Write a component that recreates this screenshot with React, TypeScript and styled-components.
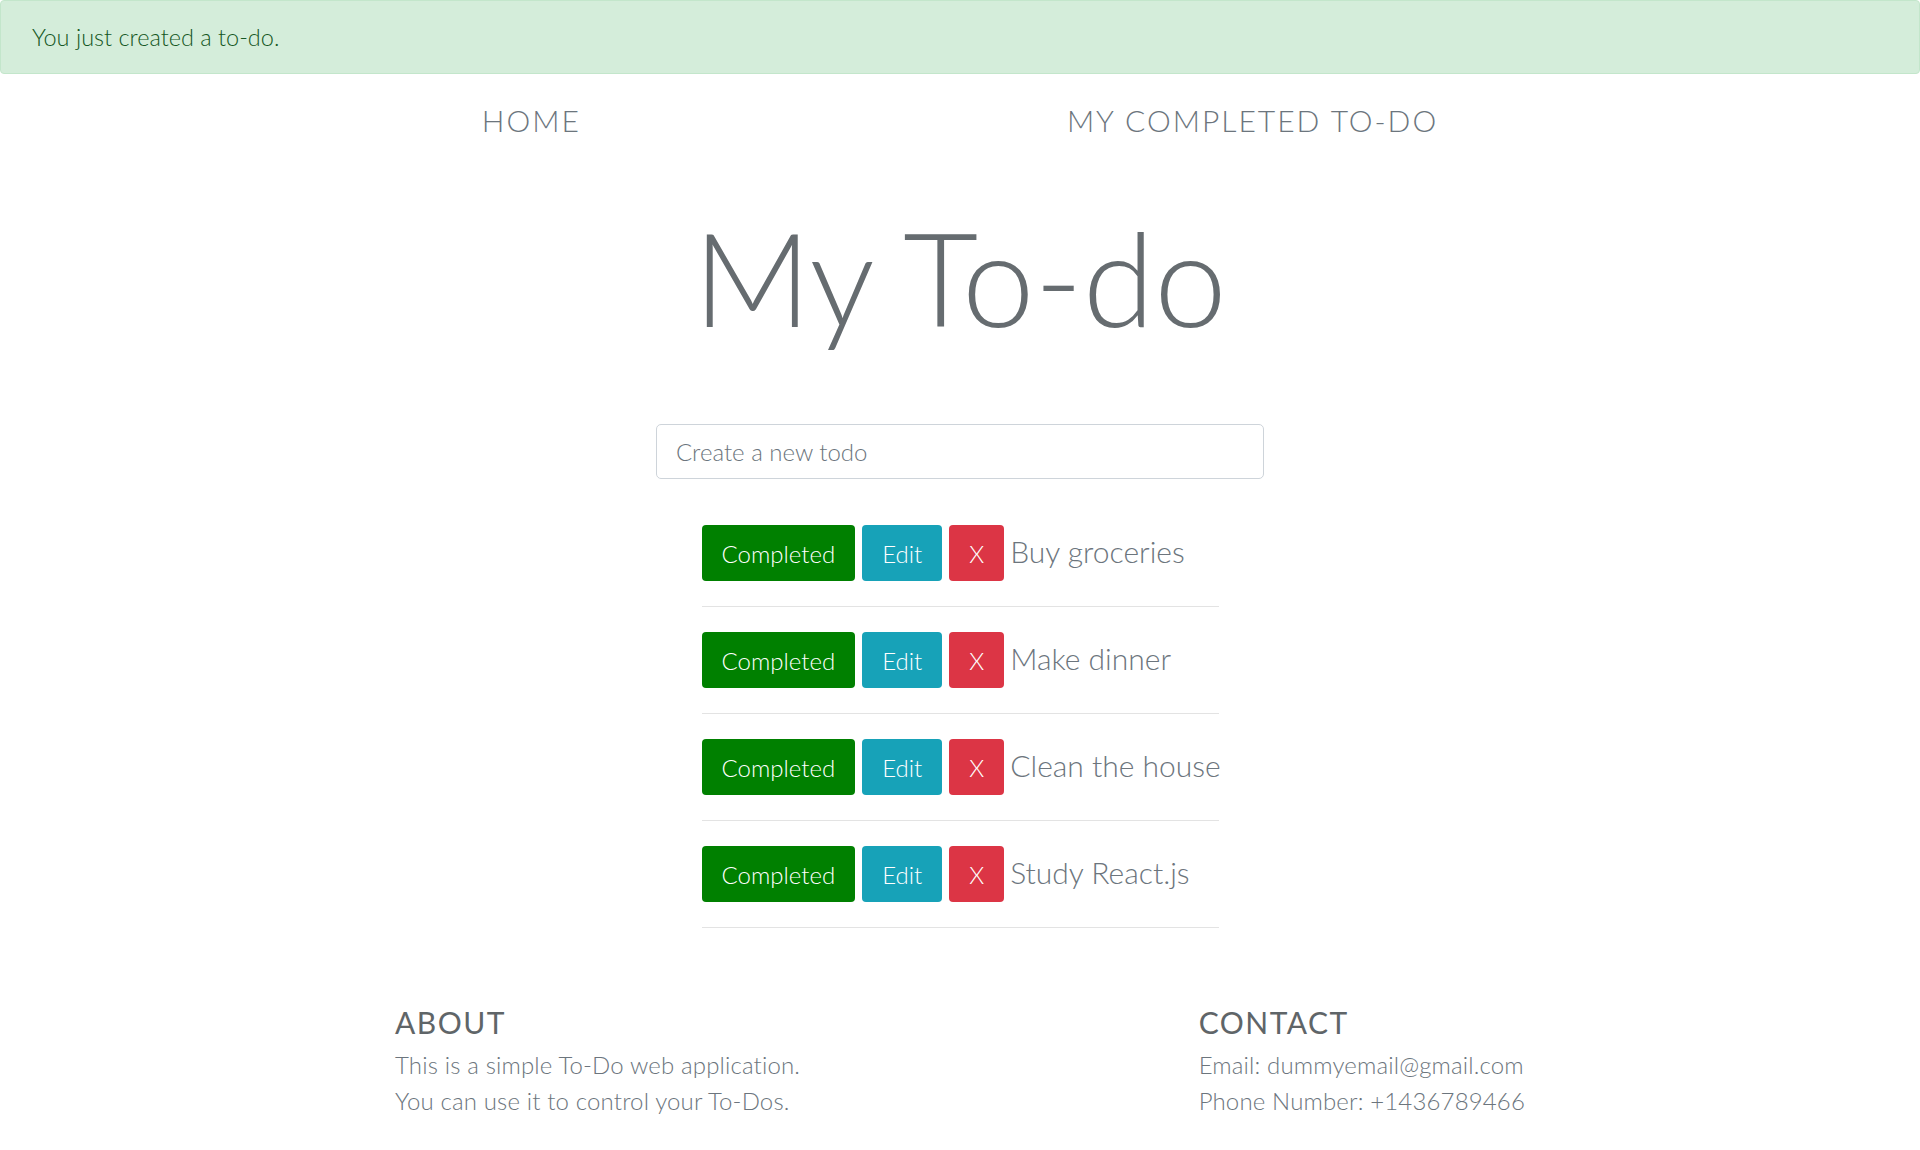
import React from "react";
import styled, { createGlobalStyle } from "styled-components";

const GlobalStyle = createGlobalStyle`
  body {
    margin: 0;
    background: #ffffff;
    font-family: Lato, "Open Sans", "Liberation Sans", sans-serif;
    font-weight: 300;
    color: #6c757d;
  }
  * {
    box-sizing: border-box;
  }
`;

const Alert = styled.div`
  height: 74px;
  display: flex;
  align-items: center;
  padding: 0 31px;
  background-color: #d4edda;
  border: 1px solid #c3e6cb;
  border-radius: 4px;
  color: #155724;
  font-size: 23.5px;
`;

const Nav = styled.nav`
  display: flex;
  justify-content: center;
  gap: 486px;
  padding-top: 28px;
`;

const NavLink = styled.a`
  font-size: 30px;
  line-height: 36px;
  letter-spacing: 2px;
  text-transform: uppercase;
  color: #6c757d;
  text-decoration: none;
`;

const Title = styled.h1`
  margin: 73px 0 0;
  text-align: center;
  font-size: 130px;
  line-height: 132px;
  font-weight: 300;
  color: #666c70;
`;

const TodoInput = styled.input`
  display: block;
  width: 608px;
  height: 55px;
  margin: 81px auto 0;
  padding: 0 19px;
  border: 1px solid #ced4da;
  border-radius: 5px;
  font-family: inherit;
  font-weight: 300;
  font-size: 24px;
  color: #495057;

  &::placeholder {
    color: #6c757d;
  }
`;

const List = styled.ul`
  list-style: none;
  width: 517px;
  margin: 21px auto 0;
  padding: 0;
`;

const Row = styled.li`
  display: flex;
  align-items: center;
  padding: 25px 0;
  border-bottom: 1px solid #e3e3e3;
  white-space: nowrap;
`;

const Button = styled.button<{ $bg: string }>`
  flex-shrink: 0;
  height: 56px;
  margin-right: 7px;
  padding: 0 20px;
  border: none;
  border-radius: 4px;
  background-color: ${(p) => p.$bg};
  color: #ffffff;
  font-family: inherit;
  font-weight: 300;
  font-size: 24px;
  cursor: pointer;
`;

const TodoText = styled.span`
  margin: 0 0 4px -1px;
  font-size: 30px;
  color: #6c757d;
`;

const Footer = styled.footer`
  display: flex;
  justify-content: space-between;
  width: 1130px;
  margin: 76px auto 0;
`;

const FooterHeading = styled.h4`
  margin: 0 0 7px;
  font-size: 30px;
  line-height: 36px;
  font-weight: 400;
  letter-spacing: 1.5px;
  color: #5f6568;
`;

const FooterLine = styled.p`
  margin: 0;
  font-size: 24px;
  line-height: 36px;
  letter-spacing: 0.15px;
  color: #6c757d;
`;

const todos = ["Buy groceries", "Make dinner", "Clean the house", "Study React.js"];

const App: React.FC = () => {
  return (
    <>
      <GlobalStyle />
      <Alert>You just created a to-do.</Alert>
      <Nav>
        <NavLink href="#">Home</NavLink>
        <NavLink href="#">My Completed To-Do</NavLink>
      </Nav>
      <Title>My To-do</Title>
      <TodoInput placeholder="Create a new todo" />
      <List>
        {todos.map((todo) => (
          <Row key={todo}>
            <Button $bg="#008000">Completed</Button>
            <Button $bg="#17a2b8">Edit</Button>
            <Button $bg="#dc3545">X</Button>
            <TodoText>{todo}</TodoText>
          </Row>
        ))}
      </List>
      <Footer>
        <div>
          <FooterHeading>ABOUT</FooterHeading>
          <FooterLine>This is a simple To-Do web application.</FooterLine>
          <FooterLine>You can use it to control your To-Dos.</FooterLine>
        </div>
        <div>
          <FooterHeading>CONTACT</FooterHeading>
          <FooterLine>Email: dummyemail@gmail.com</FooterLine>
          <FooterLine>Phone Number: +1436789466</FooterLine>
        </div>
      </Footer>
    </>
  );
};

export default App;
